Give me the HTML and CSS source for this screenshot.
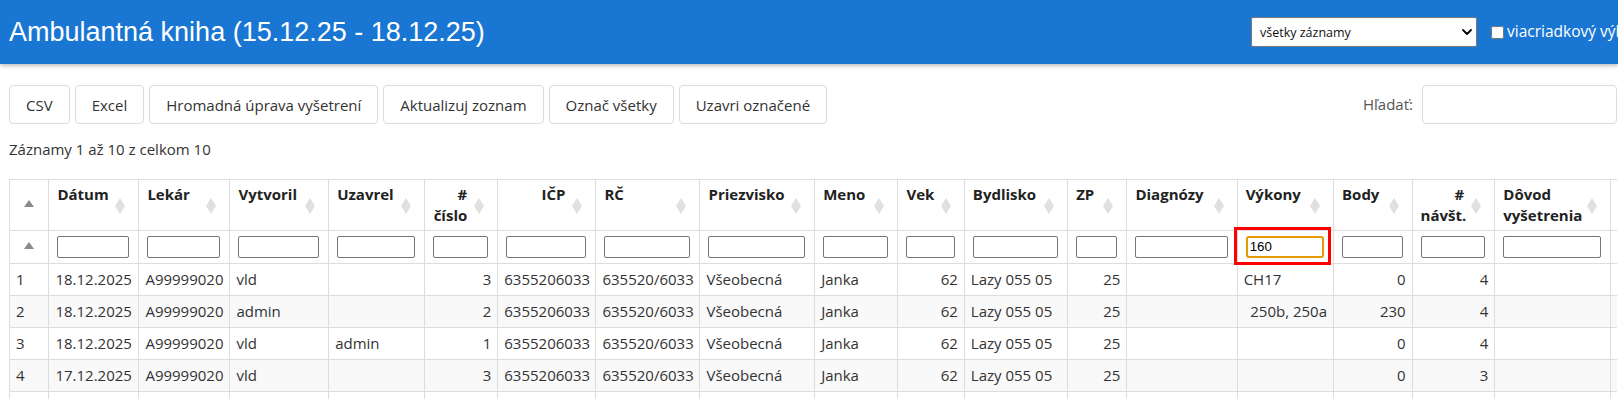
FILE: index.html
```html
<!DOCTYPE html>
<html lang="sk">
<head>
    <meta charset="UTF-8">
    <meta name="viewport" content="width=device-width, initial-scale=1.0">
    <title>Ambulantná kniha</title>
    <link rel="stylesheet" href="styles.css">
</head>
<body>
    <header class="topbar">
        <h1 class="title">Ambulantná kniha (15.12.25 - 18.12.25)</h1>
        <div class="topbar-tools">
            <span class="select-wrap">
                <select class="range-select">
                    <option>všetky záznamy</option>
                    <option>otvorené záznamy</option>
                    <option>uzavreté záznamy</option>
                </select>
                <svg class="select-arrow" viewBox="0 0 10 6" aria-hidden="true">
                    <path d="M1 1 L5 5 L9 1" fill="none" stroke="#000" stroke-width="1.8" stroke-linecap="round" stroke-linejoin="round"/>
                </svg>
            </span>
            <label class="multi-row"><input type="checkbox"> viacriadkový výber</label>
        </div>
    </header>

    <main class="content">
        <div class="toolbar">
            <div class="buttons">
                <button class="dt-button">CSV</button>
                <button class="dt-button">Excel</button>
                <button class="dt-button">Hromadná úprava vyšetrení</button>
                <button class="dt-button">Aktualizuj zoznam</button>
                <button class="dt-button">Označ všetky</button>
                <button class="dt-button">Uzavri označené</button>
            </div>
            <label class="search">Hľadať: <input type="search" class="search-input"></label>
        </div>

        <div class="info">Záznamy 1 až 10 z celkom 10</div>

        <div class="table-wrap">
            <table class="records">
                <colgroup>
                    <col class="c-idx">
                    <col class="c-date">
                    <col class="c-doctor">
                    <col class="c-created">
                    <col class="c-closed">
                    <col class="c-number">
                    <col class="c-icp">
                    <col class="c-rc">
                    <col class="c-surname">
                    <col class="c-name">
                    <col class="c-age">
                    <col class="c-address">
                    <col class="c-zp">
                    <col class="c-diag">
                    <col class="c-acts">
                    <col class="c-points">
                    <col class="c-visits">
                    <col class="c-reason">
                    <col class="c-rest">
                </colgroup>
                <thead>
                    <tr class="head-row">
                        <th class="sort-asc"></th>
                        <th class="sortable">Dátum</th>
                        <th class="sortable">Lekár</th>
                        <th class="sortable">Vytvoril</th>
                        <th class="sortable">Uzavrel</th>
                        <th class="sortable num"># číslo</th>
                        <th class="sortable num">IČP</th>
                        <th class="sortable">RČ</th>
                        <th class="sortable">Priezvisko</th>
                        <th class="sortable">Meno</th>
                        <th class="sortable">Vek</th>
                        <th class="sortable">Bydlisko</th>
                        <th class="sortable">ZP</th>
                        <th class="sortable">Diagnózy</th>
                        <th class="sortable">Výkony</th>
                        <th class="sortable">Body</th>
                        <th class="sortable num"># návšt.</th>
                        <th class="sortable">Dôvod vyšetrenia</th>
                        <th class="sortable"></th>
                    </tr>
                    <tr class="filter-row">
                        <th class="sort-asc"></th>
                        <th><input type="text" class="filter"></th>
                        <th><input type="text" class="filter"></th>
                        <th><input type="text" class="filter"></th>
                        <th><input type="text" class="filter"></th>
                        <th><input type="text" class="filter"></th>
                        <th><input type="text" class="filter"></th>
                        <th><input type="text" class="filter"></th>
                        <th><input type="text" class="filter"></th>
                        <th><input type="text" class="filter"></th>
                        <th><input type="text" class="filter"></th>
                        <th><input type="text" class="filter"></th>
                        <th><input type="text" class="filter"></th>
                        <th><input type="text" class="filter"></th>
                        <th class="marked"><input type="text" class="filter filled" value="160"><span class="highlight"></span></th>
                        <th><input type="text" class="filter"></th>
                        <th><input type="text" class="filter"></th>
                        <th><input type="text" class="filter"></th>
                        <th><input type="text" class="filter"></th>
                    </tr>
                </thead>
                <tbody>
                    <tr>
                        <td>1</td><td>18.12.2025</td><td>A99999020</td><td>vld</td><td></td>
                        <td class="num">3</td><td class="num">6355206033</td><td>635520/6033</td><td>Všeobecná</td><td>Janka</td>
                        <td class="num">62</td><td>Lazy 055 05</td><td class="num">25</td><td></td><td>CH17</td>
                        <td class="num">0</td><td class="num">4</td><td></td><td></td>
                    </tr>
                    <tr>
                        <td>2</td><td>18.12.2025</td><td>A99999020</td><td>admin</td><td></td>
                        <td class="num">2</td><td class="num">6355206033</td><td>635520/6033</td><td>Všeobecná</td><td>Janka</td>
                        <td class="num">62</td><td>Lazy 055 05</td><td class="num">25</td><td></td><td class="num">250b, 250a</td>
                        <td class="num">230</td><td class="num">4</td><td></td><td></td>
                    </tr>
                    <tr>
                        <td>3</td><td>18.12.2025</td><td>A99999020</td><td>vld</td><td>admin</td>
                        <td class="num">1</td><td class="num">6355206033</td><td>635520/6033</td><td>Všeobecná</td><td>Janka</td>
                        <td class="num">62</td><td>Lazy 055 05</td><td class="num">25</td><td></td><td></td>
                        <td class="num">0</td><td class="num">4</td><td></td><td></td>
                    </tr>
                    <tr>
                        <td>4</td><td>17.12.2025</td><td>A99999020</td><td>vld</td><td></td>
                        <td class="num">3</td><td class="num">6355206033</td><td>635520/6033</td><td>Všeobecná</td><td>Janka</td>
                        <td class="num">62</td><td>Lazy 055 05</td><td class="num">25</td><td></td><td></td>
                        <td class="num">0</td><td class="num">3</td><td></td><td></td>
                    </tr>
                    <tr>
                        <td></td><td></td><td></td><td></td><td></td>
                        <td class="num"></td><td class="num"></td><td></td><td></td><td></td>
                        <td class="num"></td><td></td><td class="num"></td><td></td><td></td>
                        <td class="num"></td><td class="num"></td><td></td><td></td>
                    </tr>
                </tbody>
            </table>
        </div>
    </main>
</body>
</html>
```

FILE: styles.css
```css
* {
    margin: 0;
    padding: 0;
    box-sizing: border-box;
}

body {
    font-family: 'Open Sans', 'Noto Sans', sans-serif;
    font-size: 15px;
    line-height: 21.5px;
    color: #333;
    background: #fff;
    overflow: hidden;
}

/* Top bar */
.topbar {
    display: flex;
    align-items: center;
    height: 64px;
    padding-left: 9px;
    background: #1976d2;
    box-shadow: 0 2px 4px rgba(0, 0, 0, 0.25);
    overflow: hidden;
}

.title {
    font-family: 'Liberation Sans', Arial, sans-serif;
    font-size: 27px;
    font-weight: normal;
    line-height: 1;
    color: #fff;
    white-space: nowrap;
}

.topbar-tools {
    display: flex;
    align-items: center;
    flex-shrink: 0;
    width: 367px;
    margin-left: auto;
    white-space: nowrap;
}

.select-wrap {
    position: relative;
    display: inline-block;
    height: 30px;
}

.range-select {
    appearance: none;
    -webkit-appearance: none;
    width: 226px;
    height: 30px;
    padding: 0 8px;
    border: 1px solid #7a7a7a;
    border-radius: 2px;
    background: #fff;
    font-family: 'Open Sans', sans-serif;
    font-size: 12.5px;
    color: #111;
}

.select-arrow {
    position: absolute;
    right: 5px;
    top: 12px;
    width: 10px;
    height: 6px;
    pointer-events: none;
}

.multi-row {
    display: flex;
    align-items: center;
    margin-left: 10px;
    color: #fff;
    font-size: 15.5px;
}

.multi-row input {
    width: 13px;
    height: 13px;
    margin: 3px 3px 3px 4px;
}

/* Toolbar */
.content {
    padding: 21px 1px 0 9px;
}

.toolbar {
    display: flex;
    align-items: center;
}

.buttons {
    display: flex;
    gap: 5px;
}

.dt-button {
    height: 39px;
    padding: 0 16px;
    border: 1px solid #dcdcdc;
    border-radius: 4px;
    background: #fff;
    font-family: inherit;
    font-size: 15px;
    color: #333;
    cursor: pointer;
}

.search {
    display: flex;
    align-items: center;
    gap: 9px;
    margin-left: auto;
    color: #555;
}

.search-input {
    width: 195px;
    height: 39px;
    padding: 0 8px;
    border: 1px solid #dcdcdc;
    border-radius: 4px;
    font-family: inherit;
    font-size: 15px;
}

.info {
    margin-top: 15px;
    height: 21.5px;
}

/* Table */
.table-wrap {
    margin-top: 18px;
    overflow: hidden;
}

.records {
    width: 1750.7px;
    table-layout: fixed;
    border-collapse: collapse;
}

.c-idx { width: 39.4px; }
.c-date { width: 90px; }
.c-doctor { width: 91px; }
.c-created { width: 98.8px; }
.c-closed { width: 96.1px; }
.c-number { width: 73px; }
.c-icp { width: 98.2px; }
.c-rc { width: 104px; }
.c-surname { width: 114.7px; }
.c-name { width: 83.3px; }
.c-age { width: 66.4px; }
.c-address { width: 103.3px; }
.c-zp { width: 59.3px; }
.c-diag { width: 110.2px; }
.c-acts { width: 96.4px; }
.c-points { width: 78.6px; }
.c-visits { width: 82.7px; }
.c-reason { width: 115.3px; }
.c-rest { width: 150px; }

.records th,
.records td {
    border: 1px solid #ddd;
}

.head-row th {
    position: relative;
    padding: 4px 30px 3px 8px;
    text-align: left;
    vertical-align: top;
    font-weight: bold;
    color: #222;
}

.head-row th.num {
    text-align: right;
}

/* sort icons */
.sortable::before,
.sortable::after {
    content: "";
    position: absolute;
    right: 13px;
    border-left: 5px solid transparent;
    border-right: 5px solid transparent;
}

.sortable::before {
    top: calc(50% - 6.5px);
    border-bottom: 8px solid #e0e0e0;
}

.sortable::after {
    top: calc(50% + 1px);
    border-top: 8px solid #e0e0e0;
}

.sort-asc {
    position: relative;
}

.sort-asc::before {
    content: "";
    position: absolute;
    right: 14px;
    bottom: calc(50% - 2px);
    border-left: 5px solid transparent;
    border-right: 5px solid transparent;
    border-bottom: 7px solid #8a8a8a;
}

.filter-row th {
    padding: 5px 9px 5px 8px;
}

.filter-row th.marked {
    position: relative;
}

.filter {
    display: block;
    width: 100%;
    height: 22px;
    padding: 1px 2px;
    border: 1px solid #767676;
    border-radius: 2px;
    background: #fff;
    font-family: 'Liberation Sans', Arial, sans-serif;
    font-size: 13.33px;
    color: #000;
}

.filter.filled {
    border: 2px solid #e69a00;
    border-radius: 3px;
    padding: 0 2px;
}

.highlight {
    position: absolute;
    left: -4px;
    top: -4px;
    width: 97px;
    height: 38px;
    border: 3px solid #f00;
    pointer-events: none;
    z-index: 2;
}

.records td {
    height: 32px;
    padding: 5px 6px;
    line-height: 21px;
    white-space: nowrap;
    overflow: hidden;
}

.records td.num {
    text-align: right;
}

.records tbody tr:nth-child(even) td {
    background: #f9f9f9;
}
```
